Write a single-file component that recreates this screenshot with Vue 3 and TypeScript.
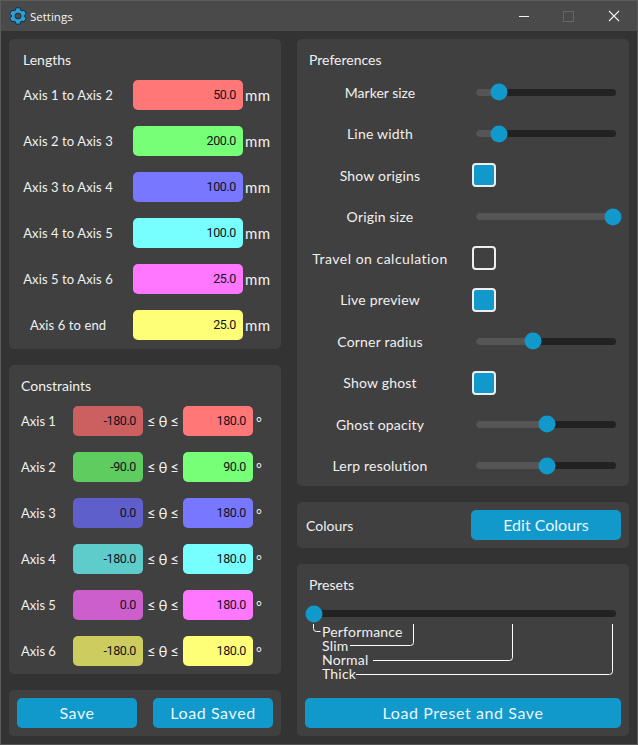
<template>
  <div class="window">
    <header class="titlebar">
      <svg class="app-icon" width="18" height="18" viewBox="0 0 18 18">
        <path fill-rule="evenodd" d="M7 .8h4l.6 2.500 1.100.6 2.500-.7 2 3.500-1.900 1.800v1l1.900 1.800-2 3.500-2.500-.7-1.100.6-.6 2.500H7l-.6-2.500-1.100-.6-2.500.7-2-3.500 1.900-1.800v-1L.800 6.700l2-3.500 2.500.7 1.100-.6zM9 6a3 3 0 1 0 0 6 3 3 0 0 0 0-6z" fill="#2f9fd6" stroke="#10304a" stroke-width="1"/>
      </svg>
      <span class="title-text">Settings</span>
      <div class="win-controls">
        <span class="win-btn"><i class="min-line"></i></span>
        <span class="win-btn"><i class="max-box"></i></span>
        <span class="win-btn">
          <svg width="12" height="12" viewBox="0 0 12 12"><path d="M1 1l10 10M11 1L1 11" stroke="#f2f2f2" stroke-width="1.1" fill="none"/></svg>
        </span>
      </div>
    </header>

    <main class="content">
      <div class="column left">
        <section class="panel lengths">
          <h2 class="panel-title">Lengths</h2>
          <div class="rows">
            <div v-for="row in lengths" :key="row.label" class="length-row">
              <span class="length-label">{{ row.label }}</span>
              <span class="field" :style="{ background: row.colour }">{{ row.value }}</span>
              <span class="unit">mm</span>
            </div>
          </div>
        </section>

        <section class="panel constraints">
          <h2 class="panel-title">Constraints</h2>
          <div class="rows">
            <div v-for="row in constraints" :key="row.label" class="constraint-row">
              <span class="axis-label">{{ row.label }}</span>
              <span class="field small" :style="{ background: row.dim }">{{ row.min }}</span>
              <span class="theta">≤ θ ≤</span>
              <span class="field small" :style="{ background: row.colour }">{{ row.max }}</span>
              <span class="degree">°</span>
            </div>
          </div>
        </section>

        <section class="panel actions">
          <button class="btn save">Save</button>
          <button class="btn save">Load Saved</button>
        </section>
      </div>

      <div class="column right">
        <section class="panel preferences">
          <h2 class="panel-title">Preferences</h2>
          <div class="pref-rows">
            <div v-for="pref in prefs" :key="pref.label" class="pref-row">
              <span class="pref-label" :style="{ letterSpacing: (pref.spacing ?? 0.2) + 'px' }">{{ pref.label }}</span>
              <span v-if="pref.checked !== undefined" class="check" :class="{ on: pref.checked }"></span>
              <span v-else class="slider">
                <span class="fill" :style="{ width: pref.at + 'px' }"></span>
                <span class="knob" :style="{ left: pref.at + 'px' }"></span>
              </span>
            </div>
          </div>
        </section>

        <section class="panel colours">
          <span class="colours-label">Colours</span>
          <button class="btn edit">Edit Colours</button>
        </section>

        <section class="panel presets">
          <h2 class="panel-title">Presets</h2>
          <div class="preset-track">
            <span class="knob first"></span>
          </div>
          <div class="preset-notes">
            <svg class="leaders" width="316" height="60" viewBox="0 0 316 60">
              <g fill="none" stroke="#ffffff" stroke-width="1">
                <path d="M8.500 0v4.500q0 3 3 3h4" />
                <path d="M108.500 0v18.500q0 3-3 3H45" />
                <path d="M207.500 0v33.500q0 3-3 3H68" />
                <path d="M307.500 0v47.500q0 3-3 3H51" />
              </g>
            </svg>
            <span v-for="name in presetNames" :key="name" class="preset-name">{{ name }}</span>
          </div>
          <button class="btn load">Load Preset and Save</button>
        </section>
      </div>
    </main>
  </div>
</template>

<script setup lang="ts">
const lengths = [
  { label: 'Axis 1 to Axis 2', value: '50.0', colour: '#ff7777' },
  { label: 'Axis 2 to Axis 3', value: '200.0', colour: '#77ff77' },
  { label: 'Axis 3 to Axis 4', value: '100.0', colour: '#7777ff' },
  { label: 'Axis 4 to Axis 5', value: '100.0', colour: '#77ffff' },
  { label: 'Axis 5 to Axis 6', value: '25.0', colour: '#ff77ff' },
  { label: 'Axis 6 to end', value: '25.0', colour: '#ffff77' }
]

const constraints = [
  { label: 'Axis 1', min: '-180.0', max: '180.0', dim: '#cc5f5f', colour: '#ff7777' },
  { label: 'Axis 2', min: '-90.0', max: '90.0', dim: '#5fcc5f', colour: '#77ff77' },
  { label: 'Axis 3', min: '0.0', max: '180.0', dim: '#5f5fcc', colour: '#7777ff' },
  { label: 'Axis 4', min: '-180.0', max: '180.0', dim: '#5fcccc', colour: '#77ffff' },
  { label: 'Axis 5', min: '0.0', max: '180.0', dim: '#cc5fcc', colour: '#ff77ff' },
  { label: 'Axis 6', min: '-180.0', max: '180.0', dim: '#cccc5f', colour: '#ffff77' }
]

// at = knob centre in px from the left end of the 140px track
const prefs: { label: string; at?: number; checked?: boolean; spacing?: number }[] = [
  { label: 'Marker size', at: 22.5, spacing: 0 },
  { label: 'Line width', at: 22.5 },
  { label: 'Show origins', checked: true },
  { label: 'Origin size', at: 136.5 },
  { label: 'Travel on calculation', checked: false, spacing: 0.5 },
  { label: 'Live preview', checked: true },
  { label: 'Corner radius', at: 56.5 },
  { label: 'Show ghost', checked: true },
  { label: 'Ghost opacity', at: 70.5 },
  { label: 'Lerp resolution', at: 70.5 }
]

const presetNames = ['Performance', 'Slim', 'Normal', 'Thick']
</script>

<style>
html, body {
  margin: 0;
  background: #333333;
}
</style>

<style scoped>
.window {
  width: 638px;
  height: 745px;
  box-sizing: border-box;
  border: 1px solid #5c5c5c;
  border-bottom-color: #555555;
  background: #333333;
  color: #f0f0f0;
  font-family: Lato, "Open Sans", sans-serif;
  font-size: 14px;
  display: flex;
  flex-direction: column;
  overflow: hidden;
}

.titlebar {
  height: 30px;
  flex: none;
  display: flex;
  align-items: center;
  background: #4a4a4a;
  padding-left: 8px;
}

.app-icon {
  flex: none;
}

.title-text {
  margin-left: 3px;
  font-family: "Open Sans", sans-serif;
  font-size: 11.500px;
  color: #f4f4f4;
}

.win-controls {
  margin-left: auto;
  display: flex;
  margin-right: 1px;
}

.win-btn {
  width: 45px;
  height: 30px;
  display: flex;
  align-items: center;
  justify-content: center;
}

.min-line {
  width: 10px;
  height: 1px;
  background: #f2f2f2;
}

.max-box {
  width: 9px;
  height: 9px;
  border: 1px solid #666666;
}

.content {
  flex: 1;
  display: grid;
  grid-template-columns: 272px 332px;
  column-gap: 16px;
  padding: 8px 8px 8px;
}

.column {
  display: flex;
  flex-direction: column;
  gap: 16px;
}

.panel {
  background: #404040;
  border-radius: 5px;
  box-sizing: border-box;
}

.panel-title {
  margin: 0 0 12px;
  height: 16px;
  line-height: 16px;
  font-size: 14px;
  font-weight: 400;
}

.rows {
  display: flex;
  flex-direction: column;
  gap: 16px;
}

.lengths {
  height: 310px;
  padding: 13px 0 0 4px;
}

.lengths .panel-title {
  margin-left: 10px;
}

.length-row {
  display: flex;
  align-items: center;
  height: 30px;
}

.length-label {
  width: 110px;
  margin-right: 10px;
  text-align: center;
  font-size: 13px;
  letter-spacing: 0.1px;
}

.field {
  width: 110px;
  height: 30px;
  box-sizing: border-box;
  padding: 0 7px 1px 0;
  border-radius: 5px;
  display: flex;
  align-items: center;
  justify-content: flex-end;
  color: #111122;
  font-family: Roboto, sans-serif;
  font-size: 12.500px;
  letter-spacing: -0.4px;
}

.field.small {
  width: 70px;
}

.unit {
  margin-left: 2px;
  font-size: 15px;
  letter-spacing: 0.3px;
}

.constraints {
  height: 309px;
  padding: 13px 0 0 12px;
}

.constraints .panel-title {
  margin-left: 0;
}

.constraint-row {
  display: flex;
  align-items: center;
  height: 30px;
}

.axis-label {
  width: 52px;
  font-size: 13px;
}

.theta {
  width: 40px;
  text-align: center;
  font-size: 15px;
  word-spacing: -1px;
}

.degree {
  margin-left: 3px;
}

.actions {
  flex: 1;
  display: flex;
  align-items: center;
  gap: 16px;
  padding-left: 8px;
}

.btn {
  border: none;
  height: 30px;
  border-radius: 5px;
  background: #1199cc;
  color: #eaf6fb;
  font-family: Lato, "Open Sans", sans-serif;
  font-size: 16px;
  letter-spacing: 0.6px;
  padding: 0 0 1px;
}

.btn.save {
  width: 120px;
}

.preferences {
  flex: 1;
  padding: 13px 0 0 8px;
}

.preferences .panel-title {
  margin: 0 0 12px 4px;
}

.pref-rows {
  display: flex;
  flex-direction: column;
  gap: 17.500px;
}

.pref-row {
  display: flex;
  align-items: center;
  height: 24px;
}

.pref-label {
  width: 150px;
  margin-right: 21px;
  text-align: center;
}

.check {
  width: 24px;
  height: 24px;
  box-sizing: border-box;
  margin-left: -4px;
  border: 2px solid #eeeeee;
  border-radius: 4px;
}

.check.on {
  background: #1199cc;
}

.slider {
  position: relative;
  width: 140px;
  height: 7px;
  border-radius: 4px;
  background: #222222;
}

.fill {
  position: absolute;
  left: 0;
  top: 0;
  bottom: 0;
  border-radius: 4px 0 0 4px;
  background: #555555;
}

.knob {
  position: absolute;
  top: 50%;
  width: 17px;
  height: 17px;
  border-radius: 50%;
  background: #1199cc;
  transform: translate(-50%, -50%);
}

.colours {
  height: 46px;
  display: flex;
  align-items: center;
  padding-left: 9px;
}

.colours-label {
  width: 165px;
}

.btn.edit {
  width: 150px;
  letter-spacing: 0;
}

.presets {
  height: 172px;
  padding: 13px 0 0 8px;
}

.presets .panel-title {
  margin: 0 0 17px 4px;
}

.preset-track {
  position: relative;
  width: 310px;
  height: 7px;
  margin-left: 1px;
  border-radius: 4px;
  background: #222222;
}

.knob.first {
  left: 7.500px;
}

.preset-notes {
  position: relative;
  height: 56px;
  margin-top: 8px;
  padding-left: 17px;
  display: flex;
  flex-direction: column;
}

.leaders {
  position: absolute;
  left: 0;
  top: -1px;
}

.preset-name {
  position: relative;
  height: 14px;
  line-height: 14px;
  font-size: 14px;
  letter-spacing: 0.2px;
}

.btn.load {
  width: 316px;
  margin-top: 17px;
}
</style>
